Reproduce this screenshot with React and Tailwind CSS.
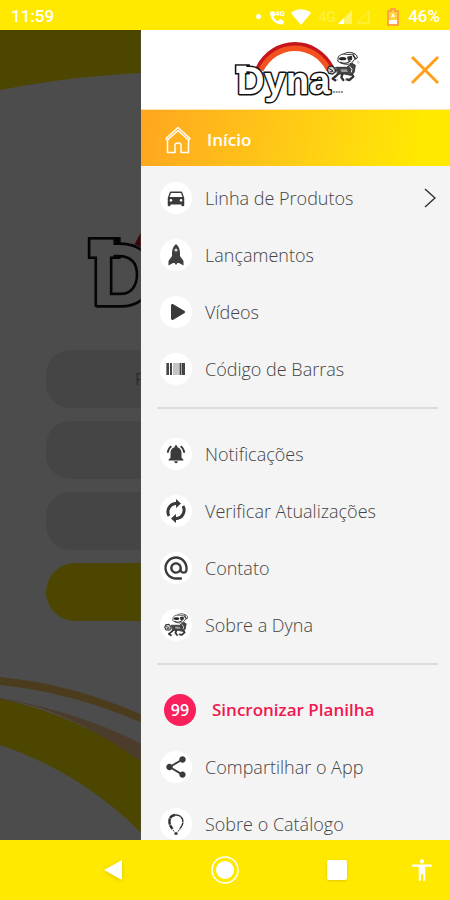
import React, { useState } from "react";
import { FaPlay } from "react-icons/fa";
import {
  MdAccessibility,
  MdAlternateEmail,
  MdDirectionsCar,
  MdNotificationsActive,
  MdShare,
} from "react-icons/md";

function Mascot() {
  return (
    <g stroke="#333" strokeWidth="3" strokeLinejoin="round" strokeLinecap="round">
      {/* legs */}
      <path d="M40 62 L30 72 L20 80 L28 85 M50 64 L46 76 L52 84 M74 62 L82 74 L70 84 L62 82" fill="none" strokeWidth="7" />
      {/* body and arm */}
      <path d="M30 46 L62 46 L78 34 L88 40 L84 62 L74 70 L56 66 L36 66Z" fill="#444" />
      <path d="M44 52 L62 52 L66 60 L46 60Z" fill="#999" stroke="none" />
      <path d="M72 44 L78 52 L76 60" stroke="#eee" fill="none" />
      <path d="M28 52 L20 42 L8 44 L4 54 L8 64 L20 66 L28 60Z" fill="#ccc" strokeWidth="4" />
      <path d="M10 50 L20 56 M12 60 L20 58" strokeWidth="3" />
      {/* head */}
      <path d="M36 20 C34 12 46 6 54 6 C62 -2 82 0 92 10 L94 18 L86 22 L76 34 C64 40 46 36 36 28Z" fill="#fff" />
      <path d="M54 6 C64 8 74 8 84 6" fill="none" />
      <ellipse cx="50" cy="20" rx="11" ry="5" fill="#222" stroke="none" />
      <path d="M66 16 L76 14 L76 22 L68 24Z M82 10 L88 20" fill="#333" strokeWidth="5" />
      <path d="M44 31 C54 36 64 34 72 28" fill="none" strokeWidth="4" />
      <path d="M32 82 L36 84 M56 84 L60 84" stroke="#bbb" fill="none" />
    </g>
  );
}

function Logo({ word = "Dyna", outline = 9, className }) {
  return (
    <svg viewBox="0 0 420 225" className={className} role="img" aria-label="Dyna">
      <path d="M98 104 C144 8 274 6 322 104" fill="none" stroke="#c4161c" strokeWidth="14" />
      <path d="M108 108 C152 22 266 20 312 108" fill="none" stroke="#f4511e" strokeWidth="16" />
      <path d="M34 95 H70 V117 H34Z" fill="none" stroke="#111" strokeWidth={outline} />
      <text
        x="35"
        y="180"
        fontSize="115"
        fill="#fff"
        stroke="#111"
        strokeWidth={outline}
        strokeLinejoin="round"
        paintOrder="stroke"
        className="font-['Liberation_Sans',sans-serif] font-bold"
      >
        {word}
      </text>
      <path d="M34 95 H64 V117 H34Z" fill="#fff" />
      <g transform="translate(303 54)">
        <Mascot />
      </g>
      <path d="M324 174 H354" stroke="#999" strokeWidth="6" strokeDasharray="6 2" />
      <circle cx="400" cy="85" r="3" fill="none" stroke="#aaa" strokeWidth="2" />
    </svg>
  );
}

function HomeIcon() {
  return (
    <svg viewBox="0 0 26 28" className="h-7 w-[26px]" fill="none" stroke="#fff" strokeWidth="1.5" strokeLinejoin="round">
      <path d="M1 12.5 L13 1.5 L25 12.5 L23.5 14 L13 4.5 L2.5 14Z" />
      <path d="M2.5 14 V26.5 H10 V19 Q10 17 13 17 Q16 17 16 19 V26.5 H23.5 V14" />
    </svg>
  );
}

function RocketIcon() {
  return (
    <svg viewBox="0 0 16 22" className="h-[22px] w-4" fill="#3f3f3f">
      <path d="M8 0 C11 2.5 12 6 12 9 L12 12 L15.5 17 V21.5 L11 19 H9.5 L8 21 L6.5 19 H5 L0.5 21.5 V17 L4 12 V9 C4 6 5 2.5 8 0Z" />
      <circle cx="8" cy="6" r="1.5" fill="#ddd" />
    </svg>
  );
}

function BarcodeIcon() {
  return (
    <svg viewBox="0 0 20 12" className="h-3 w-5">
      <path d="M2 0 V12 M5 0 V12" stroke="#444" strokeWidth="2" />
      <path d="M0.5 0 V12 M8 0 V12 M10 0 V12 M12 0 V12" stroke="#8a8a8a" />
      <path d="M14.5 0 V12" stroke="#444" strokeWidth="2" />
      <path d="M17.5 0 V12" stroke="#444" strokeWidth="3" />
    </svg>
  );
}

function UpdateIcon() {
  return (
    <svg viewBox="0 0 24 24" className="size-6" fill="none" stroke="#3a3a3a" strokeWidth="3">
      <path d="M5 17 A8.5 8.5 0 0 1 11 4.5 H13" />
      <path d="M19 7 A8.5 8.5 0 0 1 13 19.5 H11" />
      <path d="M12 0 L17 4.5 L12 9Z M12 15 L7 19.5 L12 24Z" fill="#3a3a3a" stroke="none" />
    </svg>
  );
}

function BulbIcon() {
  return (
    <svg viewBox="0 0 18 22" className="h-[22px] w-[18px]" fill="none" stroke="#333">
      <path d="M8 2 C4 2.5 2 5.5 2.5 9.5 C2.8 12.5 4 14 5.5 16" strokeWidth="2.5" strokeDasharray="6 0.5" />
      <path d="M8 2 C13 1.5 16.5 5 15.8 10 C15.5 13 13.5 14.5 12.5 16.5" strokeWidth="1.5" strokeDasharray="6 0.4" />
      <path d="M6 17 L7 18.5 M12 17 L11 18.5" strokeWidth="1" />
      <path d="M7.5 20.5 H10.5" strokeWidth="2.5" />
    </svg>
  );
}

function DogIcon() {
  return (
    <svg viewBox="0 -6 96 102" className="size-[26px]">
      <Mascot />
    </svg>
  );
}

const catalogItems = [
  { label: "Linha de Produtos", icon: <MdDirectionsCar className="size-[22px]" />, arrow: true },
  { label: "Lançamentos", icon: <RocketIcon /> },
  { label: "Vídeos", icon: <FaPlay className="ml-1 h-4 w-[14px]" /> },
  { label: "Código de Barras", icon: <BarcodeIcon /> },
];

const supportItems = [
  { label: "Notificações", icon: <MdNotificationsActive className="size-[22px]" /> },
  { label: "Verificar Atualizações", icon: <UpdateIcon /> },
  { label: "Contato", icon: <MdAlternateEmail className="size-7" /> },
  { label: "Sobre a Dyna", icon: <DogIcon /> },
];

const appItems = [
  { label: "Sincronizar Planilha", badge: 99 },
  { label: "Compartilhar o App", icon: <MdShare className="size-[26px]" /> },
  { label: "Sobre o Catálogo", icon: <BulbIcon /> },
];

function MenuItem({ item }) {
  if (item.badge) {
    return (
      <li>
        <a href="#" className="flex h-[57px] items-center gap-4 pl-[23px] text-[17px] font-semibold text-[#f0184f]">
          <span className="flex size-8 items-center justify-center rounded-full bg-[#f9205c] text-base font-semibold text-white">
            {item.badge}
          </span>
          {item.label}
        </a>
      </li>
    );
  }

  return (
    <li>
      <a href="#" className="flex h-[57px] items-center gap-[13px] pr-[14px] pl-[19px] text-lg font-light text-[#444]">
        <span className="flex size-8 shrink-0 items-center justify-center rounded-full bg-white text-[#3a3a3a]">
          {item.icon}
        </span>
        <span className="flex-1">{item.label}</span>
        {item.arrow && (
          <svg viewBox="0 0 12 20" className="h-5 w-3" fill="none" stroke="#333" strokeWidth="1.5">
            <path d="M1 1 L11 10 L1 19" />
          </svg>
        )}
      </a>
    </li>
  );
}

function MenuList({ items }) {
  return (
    <ul>
      {items.map((item) => (
        <MenuItem key={item.label} item={item} />
      ))}
    </ul>
  );
}

function Divider() {
  return <hr className="mt-[10px] mr-3 mb-4 ml-4 border-t-2 border-[#dcdcdc]" />;
}

function Drawer({ onClose }) {
  return (
    <aside className="absolute inset-y-0 right-0 left-[141px] overflow-hidden bg-[#f4f4f4] shadow-[0_0_2px_#555]">
      <div className="flex h-20 items-center justify-between border-b border-[#ffe3b0] bg-white pr-[10px] pl-[84px]">
        <Logo className="mt-1 h-[75px] w-[140px]" />
        <button type="button" onClick={onClose} aria-label="Fechar menu">
          <svg viewBox="0 0 30 30" className="size-[30px]" stroke="#ff9f1c" strokeWidth="3">
            <path d="M2 2 L28 28 M28 2 L2 28" />
          </svg>
        </button>
      </div>

      <nav>
        <a
          href="#"
          className="flex h-14 items-center gap-4 bg-linear-100 from-[#ffa61f] to-[#ffe900] to-90% pt-[3px] pl-6 text-[17px] font-semibold text-white"
        >
          <HomeIcon />
          Início
        </a>
        <div className="pt-[3px]">
          <MenuList items={catalogItems} />
          <Divider />
          <MenuList items={supportItems} />
          <Divider />
          <MenuList items={appItems} />
        </div>
      </nav>
    </aside>
  );
}

function StatusBar() {
  return (
    <header className="flex h-[30px] shrink-0 items-center justify-between bg-[#ffe900] pt-[3px] pr-[10px] pl-[11px] font-['Roboto',sans-serif] text-[17px] font-medium text-white">
      <span>11:59</span>
      <div className="flex items-center">
        <span className="mr-2 size-[5px] rounded-full bg-white" />
        <svg viewBox="0 0 18 16" className="mr-1 h-4 w-[18px]" fill="#fff">
          <path d="M1 3 L5 2 L6.5 6 L4.5 8 Q6 11 9 12 L11 10 L15 12 L14 15.5 C6 16 1 10 1 3Z" />
          <text x="6" y="7" fontSize="8" fontWeight="700">4G</text>
        </svg>
        <svg viewBox="0 0 20 16" className="mr-2 h-4 w-5" fill="#fff">
          <path d="M0 4 C6 -1 14 -1 20 4 L10 16Z" />
        </svg>
        <span className="mr-[2px] text-sm font-normal text-white/30">4G</span>
        <svg viewBox="0 0 14 14" className="mr-1 size-[14px]">
          <path d="M14 0 V14 H0Z" fill="#fff" opacity="0.4" />
          <path d="M6 8 V14 H0Z" fill="#fff" />
        </svg>
        <svg viewBox="0 0 14 14" className="mr-[17px] size-[14px]" fill="none" stroke="#fff" opacity="0.4">
          <path d="M13 1 V13 H1Z" />
        </svg>
        <svg viewBox="0 0 12 18" className="mr-[9px] h-[18px] w-3">
          <path d="M4 1 H8 V3 H11 V17 H1 V3 H4Z" fill="#ffd33d" stroke="#ff9248" strokeWidth="1.5" />
          <path d="M2 12 H10 V16 H2Z M6 5 L8 9 H4Z" fill="#fff" />
        </svg>
        <span>46%</span>
      </div>
    </header>
  );
}

function HomeScreen() {
  return (
    <main className="h-full bg-white">
      <svg viewBox="0 30 450 810" preserveAspectRatio="none" className="absolute inset-0 size-full">
        <path d="M0 30 H450 V90 C300 68 140 62 0 90Z" fill="#ffe900" />
        <path d="M0 677 Q72 684 140 714 Q230 752 300 830 L290 840 Q220 758 140 722 Q70 692 0 685Z" fill="#ffc864" />
        <path d="M0 698 Q76 711 140 743 L240 840 L140 762 Q60 704 0 700Z" fill="#ffc890" />
        <path d="M0 699 Q76 714 140 761 L220 840 H148 Q86 774 0 745Z" fill="#ffe900" />
      </svg>
      <div className="relative flex flex-col items-center px-[46px] pt-[137px]">
        <Logo word="D" outline={7} className="h-[172px] w-[322px]" />
        <div className="mt-[11px] flex w-full flex-col gap-[13px]">
          <input
            type="text"
            aria-label="Filtrar produtos"
            placeholder="Filtrar produtos"
            className="h-[58px] rounded-3xl bg-[#e8e8e8] pl-[89px] text-base text-[#333]"
          />
          <button type="button" aria-label="Produtos" className="h-[58px] rounded-3xl bg-[#e8e8e8]" />
          <button type="button" aria-label="Montadoras" className="h-[58px] rounded-3xl bg-[#e8e8e8]" />
          <button type="button" aria-label="Buscar" className="h-[58px] rounded-full bg-[#ffe900]" />
        </div>
      </div>
    </main>
  );
}

function NavigationBar() {
  return (
    <footer className="grid h-[60px] shrink-0 grid-cols-[1fr_112px_112px_112px_1fr] items-center justify-items-center bg-[#ffe900] text-white">
      <button type="button" aria-label="Voltar" className="col-start-2">
        <svg viewBox="0 0 18 20" className="h-5 w-[18px] drop-shadow-sm" fill="#fff">
          <path d="M18 0 V20 L0 10Z" />
        </svg>
      </button>
      <button type="button" aria-label="Tela inicial">
        <svg viewBox="0 0 30 30" className="size-[30px]">
          <circle cx="15" cy="15" r="13" fill="none" stroke="#fff" strokeWidth="1.5" />
          <circle cx="15" cy="15" r="9" fill="#fff" />
        </svg>
      </button>
      <button type="button" aria-label="Recentes" className="size-5 rounded-xs bg-white shadow-sm" />
      <button type="button" aria-label="Acessibilidade">
        <MdAccessibility className="size-[26px]" />
      </button>
    </footer>
  );
}

function App() {
  const [open, setOpen] = useState(true);

  return (
    <div className="flex h-screen flex-col overflow-hidden font-['Open_Sans',sans-serif]">
      <StatusBar />
      <div className="relative min-h-0 flex-1 overflow-hidden">
        <HomeScreen />
        {open && (
          <>
            <div className="absolute inset-0 bg-black/70" onClick={() => setOpen(false)} />
            <Drawer onClose={() => setOpen(false)} />
          </>
        )}
      </div>
      <NavigationBar />
    </div>
  );
}

export default App;
